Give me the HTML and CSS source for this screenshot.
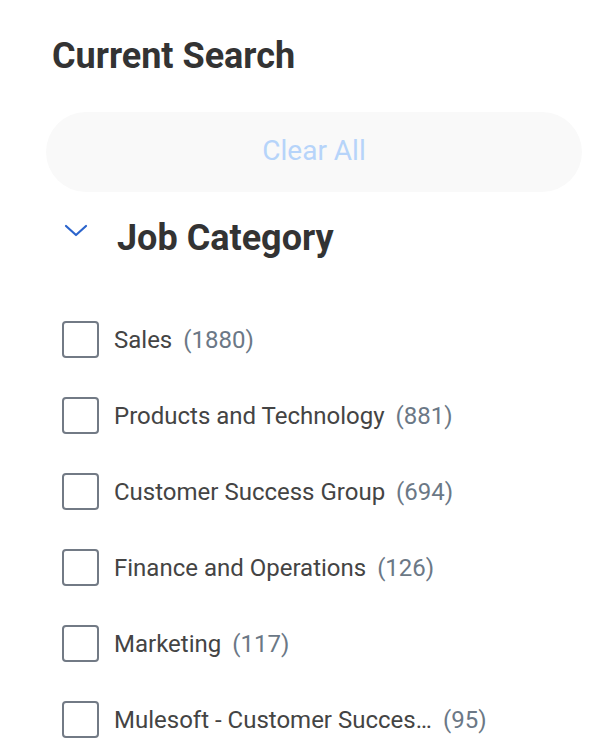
FILE: index.html
```html
<!DOCTYPE html>
<html lang="en">
<head>
    <meta charset="UTF-8">
    <meta name="viewport" content="width=device-width, initial-scale=1.0">
    <title>Search Filters</title>
    <link rel="stylesheet" href="styles.css">
</head>
<body>

    <div class="filters">
        <h2 class="current-title">Current Search</h2>
        <button class="clear-all" disabled>Clear All</button>

        <div class="group">
            <div class="group-head">
                <svg class="chevron" width="24" height="14" viewBox="0 0 24 14">
                    <path d="M2 2 L12 11 L22 2" fill="none" stroke="#2b64cc" stroke-width="2.2" stroke-linecap="round" stroke-linejoin="round"/>
                </svg>
                <h3>Job Category</h3>
            </div>

            <ul class="options">
                <li><span class="box"></span><span class="label">Sales</span><span class="count">(1880)</span></li>
                <li><span class="box"></span><span class="label">Products and Technology</span><span class="count">(881)</span></li>
                <li><span class="box"></span><span class="label">Customer Success Group</span><span class="count">(694)</span></li>
                <li><span class="box"></span><span class="label">Finance and Operations</span><span class="count">(126)</span></li>
                <li><span class="box"></span><span class="label">Marketing</span><span class="count">(117)</span></li>
                <li><span class="box"></span><span class="label truncate">Mulesoft - Customer Success Group</span><span class="count">(95)</span></li>
            </ul>
        </div>
    </div>

</body>
</html>
```

FILE: styles.css
```css
body {
    margin: 0;
    font-family: Roboto, 'Liberation Sans', sans-serif;
    background-color: #FFFFFF;
    color: #333333;
}

.filters {
    padding: 35px 16px 0 46px;
}

.current-title {
    margin: 0 0 0 6px;
    font-size: 36px;
    font-weight: 700;
    line-height: 42px;
    color: #333333;
}

.clear-all {
    display: block;
    width: 536px;
    height: 80px;
    margin-top: 35px;
    border: none;
    border-radius: 40px;
    background-color: #F9F9F9;
    color: #B6D4FA;
    font-family: inherit;
    font-size: 28px;
    padding-bottom: 4px;
    cursor: default;
}

.group-head {
    display: flex;
    align-items: center;
    height: 88px;
    padding-left: 18px;
}

.chevron {
    margin-top: -10px;
}

.group-head h3 {
    margin: 3px 0 0 29px;
    font-size: 36px;
    font-weight: 700;
    color: #333333;
}

.options {
    list-style: none;
    margin: 0;
    padding: 21px 0 0 16px;
}

.options li {
    display: flex;
    align-items: center;
    height: 76px;
    font-size: 24px;
}

.box {
    flex: none;
    width: 33px;
    height: 33px;
    border: 2px solid #727A85;
    border-radius: 4px;
    margin-right: 15px;
}

.label {
    padding-top: 2px;
    color: #444444;
}

.truncate {
    max-width: 318px;
    white-space: nowrap;
    overflow: hidden;
    text-overflow: ellipsis;
}

.count {
    padding-top: 2px;
    margin-left: 11px;
    color: #6B7886;
}
```
